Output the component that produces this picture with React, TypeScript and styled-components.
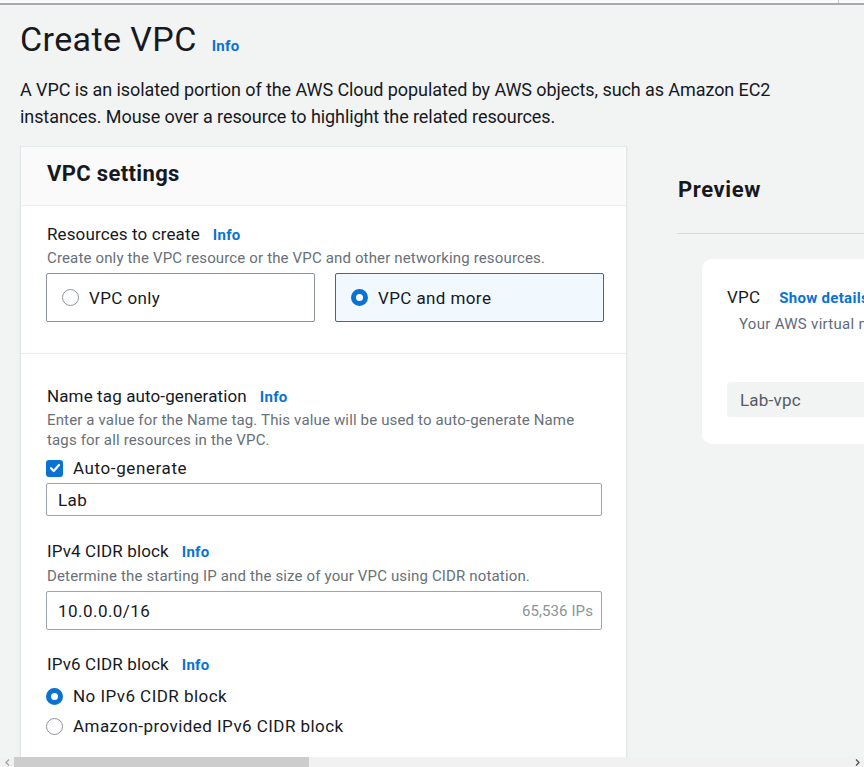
import React from 'react';
import styled, { createGlobalStyle } from 'styled-components';

const GlobalStyle = createGlobalStyle`
  html, body {
    margin: 0;
    padding: 0;
    height: 100%;
    overflow: hidden;
    background-color: #f2f3f3;
    font-family: Roboto, "Liberation Sans", Arial, sans-serif;
    color: #16191f;
  }
  #root {
    height: 100%;
  }
`;

const Page = styled.div`
  height: 100vh;
  display: flex;
  flex-direction: column;
`;

const TopStrip = styled.div`
  height: 3px;
  flex-shrink: 0;
  display: flex;
  justify-content: flex-end;
  padding-right: 25px;
  background-color: #fbfbfb;
  border-bottom: 2px solid #a7abb0;
`;

const Tick = styled.div`
  width: 1px;
  background-color: #c4c6c8;
`;

const Content = styled.main`
  flex: 1;
  overflow: hidden;
  padding-left: 20px;
`;

const TitleRow = styled.div`
  display: flex;
  align-items: baseline;
  gap: 15px;
  margin-top: 14px;
`;

const Title = styled.h1`
  margin: 0;
  font-size: 34px;
  line-height: 40px;
  font-weight: 400;
  letter-spacing: 0.4px;
  color: #16191f;
`;

const InfoLink = styled.a<{ $size?: number }>`
  font-size: ${(p) => p.$size || 15}px;
  font-weight: 700;
  color: #0972d3;
  text-decoration: none;
  letter-spacing: 0.3px;
`;

const Intro = styled.p`
  margin: 17px 0 0 0;
  max-width: 790px;
  font-size: 18px;
  line-height: 27px;
  letter-spacing: -0.08px;
  color: #16191f;
`;

const Columns = styled.div`
  display: flex;
  align-items: flex-start;
  margin-top: 16px;
`;

const SettingsCard = styled.section`
  width: 607px;
  flex-shrink: 0;
  box-sizing: border-box;
  background-color: #ffffff;
  border: 1px solid #e4e7e9;
  box-shadow: 0 1px 1px rgba(0, 28, 36, 0.12);
`;

const CardHeader = styled.div`
  padding: 14px 26px 18px 26px;
  background-color: #fafafa;
  border-bottom: 1px solid #eaeded;
`;

const CardTitle = styled.h2`
  margin: 0;
  font-size: 22px;
  line-height: 26px;
  font-weight: 700;
  letter-spacing: 0.35px;
`;

const Section = styled.div<{ $top: number; $bottom: number; $divider?: boolean }>`
  padding: ${(p) => p.$top}px 24px ${(p) => p.$bottom}px 25px;
  border-bottom: ${(p) => (p.$divider ? '1px solid #eaeded' : 'none')};
`;

const Field = styled.div<{ $gap?: number }>`
  margin-top: ${(p) => p.$gap || 0}px;
`;

const LabelRow = styled.div`
  display: flex;
  align-items: baseline;
  gap: 13px;
  font-size: 17px;
  line-height: 22px;
  letter-spacing: 0.12px;
  padding-left: 1px;
`;

const Description = styled.div<{ $gap?: number }>`
  margin-top: ${(p) => p.$gap || 2}px;
  font-size: 15px;
  line-height: 20px;
  letter-spacing: 0.15px;
  color: #687078;
  padding-left: 1px;
`;

const Tiles = styled.div`
  display: grid;
  grid-template-columns: 269px 269px;
  gap: 20px;
  margin-top: 5px;
`;

const Tile = styled.label<{ $selected?: boolean }>`
  height: 49px;
  box-sizing: border-box;
  display: flex;
  align-items: center;
  gap: 10px;
  padding-left: 15px;
  border: 1px solid ${(p) => (p.$selected ? '#0a79c9' : '#8d939b')};
  border-radius: 2px;
  background-color: ${(p) => (p.$selected ? '#f1f8fe' : '#ffffff')};
  font-size: 17px;
  letter-spacing: 0.4px;
`;

const Radio = styled.span<{ $checked?: boolean }>`
  width: 17px;
  height: 17px;
  box-sizing: border-box;
  border-radius: 50%;
  flex-shrink: 0;
  border: ${(p) => (p.$checked ? '5.5px solid #0972d3' : '1.5px solid #8d939b')};
  background-color: #ffffff;
`;

const CheckRow = styled.label`
  display: flex;
  align-items: center;
  gap: 10px;
  margin-top: 7px;
  height: 22px;
  font-size: 17px;
  letter-spacing: 0.6px;
`;

const CheckBox = styled.span`
  width: 17px;
  height: 17px;
  border-radius: 3px;
  background-color: #0972d3;
  display: flex;
  align-items: center;
  justify-content: center;
  flex-shrink: 0;
`;

const InputBox = styled.div<{ $height: number; $gap: number }>`
  height: ${(p) => p.$height}px;
  margin-top: ${(p) => p.$gap}px;
  box-sizing: border-box;
  display: flex;
  align-items: center;
  justify-content: space-between;
  padding: 0 8px 0 11px;
  border: 1px solid #9ea5ad;
  border-radius: 2px;
  background-color: #ffffff;
  font-size: 17px;
  letter-spacing: 0.45px;
`;

const InputHint = styled.span`
  font-size: 15px;
  letter-spacing: 0.1px;
  color: #879596;
`;

const RadioList = styled.div`
  display: flex;
  flex-direction: column;
  gap: 8px;
  margin-top: 9px;
`;

const RadioRow = styled.label`
  display: flex;
  align-items: center;
  gap: 10px;
  height: 22px;
  font-size: 17px;
  letter-spacing: 0.45px;
`;

const PreviewColumn = styled.aside`
  width: 340px;
  flex-shrink: 0;
  margin-left: 50px;
`;

const PreviewHeading = styled.h2`
  margin: 0;
  padding: 30px 0 29px 1px;
  font-size: 22px;
  line-height: 28px;
  font-weight: 700;
  letter-spacing: 0.6px;
  border-bottom: 1px solid #d5dbdb;
`;

const PreviewCard = styled.div`
  margin: 25px 0 0 25px;
  padding: 27px 0 27px 25px;
  background-color: #ffffff;
  border-radius: 10px;
  white-space: nowrap;
`;

const PreviewTitleRow = styled.div`
  display: flex;
  align-items: baseline;
  gap: 19px;
  font-size: 17px;
  line-height: 22px;
  letter-spacing: 0.2px;
`;

const PreviewDesc = styled.div`
  margin-top: 5px;
  padding-left: 12px;
  font-size: 15px;
  line-height: 20px;
  letter-spacing: 0.3px;
  color: #5f6b7a;
`;

const ResourceChip = styled.div`
  margin-top: 48px;
  height: 35px;
  display: flex;
  align-items: center;
  padding-left: 13px;
  background-color: #f2f3f3;
  border-radius: 4px 0 0 4px;
  font-size: 17px;
  letter-spacing: 0.2px;
  color: #545b64;
`;

const ScrollBar = styled.div`
  height: 10px;
  flex-shrink: 0;
  display: flex;
  align-items: center;
  background-color: #f1f1f1;
`;

const ScrollArrow = styled.div`
  width: 14px;
  height: 10px;
  display: flex;
  align-items: center;
  justify-content: center;
  flex-shrink: 0;
`;

const ScrollThumb = styled.div`
  width: 295px;
  height: 10px;
  background-color: #cdcdcd;
`;

const ScrollSpacer = styled.div`
  flex: 1;
`;

const CheckIcon = () => (
  <svg width="12" height="12" viewBox="0 0 12 12">
    <polyline points="2,6.2 4.8,9 10,3" fill="none" stroke="#ffffff" strokeWidth="2.2" strokeLinecap="round" strokeLinejoin="round" />
  </svg>
);

export default function App() {
  return (
    <Page>
      <GlobalStyle />
      <TopStrip>
        <Tick />
      </TopStrip>
      <Content>
        <TitleRow>
          <Title>Create VPC</Title>
          <InfoLink $size={15}>Info</InfoLink>
        </TitleRow>
        <Intro>
          A VPC is an isolated portion of the AWS Cloud populated by AWS objects, such as Amazon EC2
          instances. Mouse over a resource to highlight the related resources.
        </Intro>
        <Columns>
          <SettingsCard>
            <CardHeader>
              <CardTitle>VPC settings</CardTitle>
            </CardHeader>
            <Section $top={17} $bottom={31} $divider>
              <LabelRow>
                Resources to create <InfoLink>Info</InfoLink>
              </LabelRow>
              <Description>Create only the VPC resource or the VPC and other networking resources.</Description>
              <Tiles>
                <Tile>
                  <Radio />
                  VPC only
                </Tile>
                <Tile $selected>
                  <Radio $checked />
                  VPC and more
                </Tile>
              </Tiles>
            </Section>
            <Section $top={31} $bottom={60}>
              <Field>
                <LabelRow>
                  Name tag auto-generation <InfoLink>Info</InfoLink>
                </LabelRow>
                <Description $gap={2}>
                  Enter a value for the Name tag. This value will be used to auto-generate Name tags for all
                  resources in the VPC.
                </Description>
                <CheckRow>
                  <CheckBox>
                    <CheckIcon />
                  </CheckBox>
                  Auto-generate
                </CheckRow>
                <InputBox $height={33} $gap={4}>Lab</InputBox>
              </Field>
              <Field $gap={24}>
                <LabelRow>
                  IPv4 CIDR block <InfoLink>Info</InfoLink>
                </LabelRow>
                <Description $gap={3}>
                  Determine the starting IP and the size of your VPC using CIDR notation.
                </Description>
                <InputBox $height={39} $gap={5}>
                  10.0.0.0/16
                  <InputHint>65,536 IPs</InputHint>
                </InputBox>
              </Field>
              <Field $gap={23}>
                <LabelRow>
                  IPv6 CIDR block <InfoLink>Info</InfoLink>
                </LabelRow>
                <RadioList>
                  <RadioRow>
                    <Radio $checked />
                    No IPv6 CIDR block
                  </RadioRow>
                  <RadioRow>
                    <Radio />
                    Amazon-provided IPv6 CIDR block
                  </RadioRow>
                </RadioList>
              </Field>
            </Section>
          </SettingsCard>
          <PreviewColumn>
            <PreviewHeading>Preview</PreviewHeading>
            <PreviewCard>
              <PreviewTitleRow>
                VPC <InfoLink>Show details</InfoLink>
              </PreviewTitleRow>
              <PreviewDesc>Your AWS virtual network</PreviewDesc>
              <ResourceChip>Lab-vpc</ResourceChip>
            </PreviewCard>
          </PreviewColumn>
        </Columns>
      </Content>
      <ScrollBar>
        <ScrollArrow>
          <svg width="5" height="7" viewBox="0 0 5 7">
            <polyline points="4,0.5 1,3.5 4,6.5" fill="none" stroke="#a3a3a3" strokeWidth="1.3" />
          </svg>
        </ScrollArrow>
        <ScrollThumb />
        <ScrollSpacer />
        <ScrollArrow>
          <svg width="5" height="7" viewBox="0 0 5 7">
            <polyline points="1,0.5 4,3.5 1,6.5" fill="none" stroke="#505050" strokeWidth="1.3" />
          </svg>
        </ScrollArrow>
      </ScrollBar>
    </Page>
  );
}
